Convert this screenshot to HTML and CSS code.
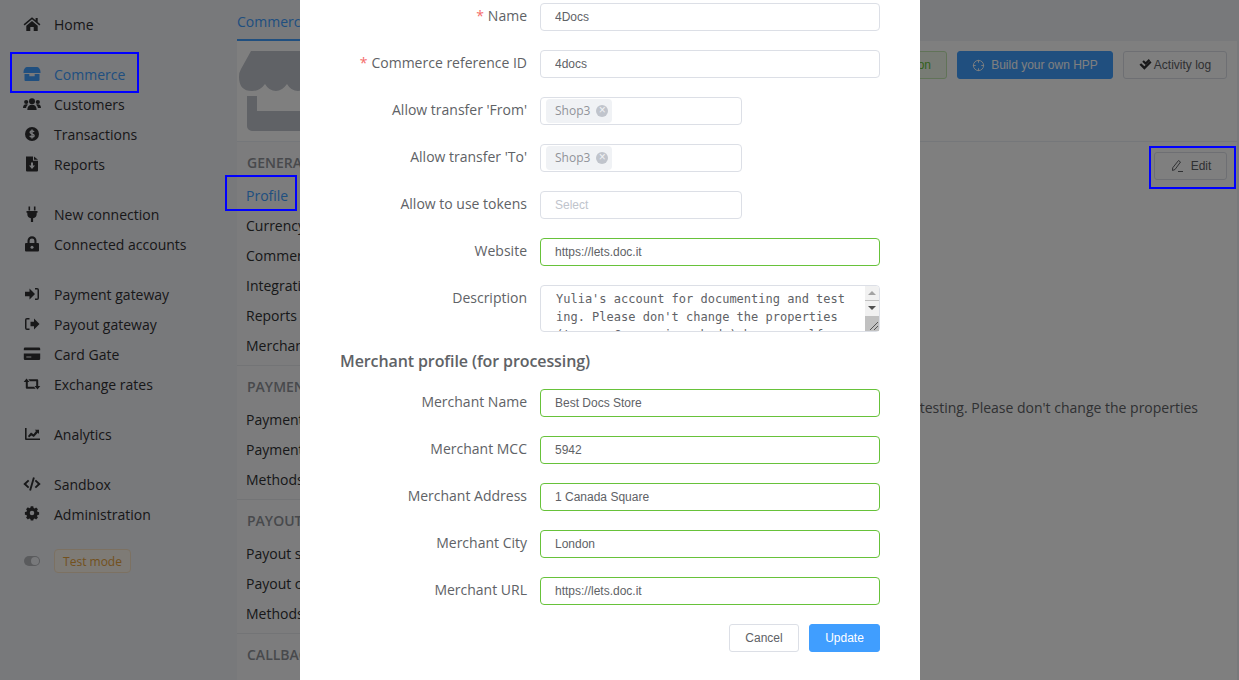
FILE: index.html

```html
<!DOCTYPE HTML>
<html>
<head>
<meta charset="utf-8">
<title>Commerce</title>
<link rel="stylesheet" href="styles.css">
</head>

<body>
<div class="page">
	<div class="sidebar">
		<ul class="menu">
			<li><svg class="ico" viewBox="0 0 18 18"><path d="M9 2.200.6 9.300l1 1.200L9 4.300l7.400 6.200 1-1.200-2.700-2.300V3h-2.100v2.200z"/><path d="M3.300 10.800 9 6l5.700 4.800V16h-4v-4H7.300v4h-4z"/></svg>Home</li>
		</ul>
		<ul class="menu">
			<li class="on"><svg class="ico" viewBox="0 0 18 18"><path d="M4 2h10c1.500 0 3.500 2 3.500 5v1H.5V7c0-3 2-5 3.500-5z"/><path d="M1.500 9h4.800v2.200h5.400V9h4.800v6a1 1 0 0 1-1 1h-13a1 1 0 0 1-1-1z"/></svg>Commerce</li>
			<li><svg class="ico" viewBox="0 0 18 18"><circle cx="9" cy="6.300" r="3"/><circle cx="3.200" cy="7" r="2.100"/><circle cx="14.800" cy="7" r="2.100"/><path d="M4.300 15c0-3.500 1.800-5.300 4.700-5.300s4.700 1.800 4.700 5.300zM0 13c0-2.300 1-3.700 3.200-3.700.7 0 1.200.1 1.700.4C3.800 10.500 3.200 11.600 3.100 13zM18 13c0-2.300-1-3.700-3.200-3.700-.7 0-1.200.1-1.700.4 1.100.8 1.700 1.900 1.800 3.300z"/></svg>Customers</li>
			<li><svg class="ico" viewBox="0 0 18 18"><circle cx="9" cy="9" r="7"/><path class="cut" d="M11 7c-.3-.8-1-1.100-2-1.100-1.100 0-1.900.5-1.900 1.400 0 2 4 1.100 4 3.200 0 1-.9 1.500-2.100 1.500-1.100 0-1.900-.4-2.200-1.300M9 4.500v9"/></svg>Transactions</li>
			<li><svg class="ico" viewBox="0 0 18 18"><path d="M3 1.500h7v4.200h5v9.800a1 1 0 0 1-1 1H4a1 1 0 0 1-1-1zM11 1.500l4 3.200h-4z"/><path class="hole" d="M8 7.500h2v3h2l-3 3.500-3-3.500h2z"/></svg>Reports</li>
		</ul>
		<ul class="menu">
			<li><svg class="ico" viewBox="0 0 18 18"><path d="M5.500 1.500h1.600v4H5.500zM10.900 1.500h1.600v4h-1.600zM3.500 6h11v1.800h-.8V9c0 2.400-1.500 4-3.600 4.300V17H7.900v-3.700C5.800 13 4.300 11.400 4.300 9V7.800h-.8z"/></svg>New connection</li>
			<li><svg class="ico" viewBox="0 0 18 18"><path d="M3 8h1.500V5.800a4.500 4.500 0 0 1 9 0V8H15a1 1 0 0 1 1 1v6.500a1 1 0 0 1-1 1H3a1 1 0 0 1-1-1V9a1 1 0 0 1 1-1zm3.600 0h4.800V5.800a2.400 2.400 0 0 0-4.800 0z"/><circle class="hole" cx="9" cy="12.200" r="1.500"/></svg>Connected accounts</li>
		</ul>
		<ul class="menu">
			<li><svg class="ico" viewBox="0 0 18 18"><path d="M2 6.700h4.500V3.500L12 9l-5.500 5.500v-3.200H2z"/><path d="M12 3h2a2 2 0 0 1 2 2v8a2 2 0 0 1-2 2h-2v-1.500h2.500V4.500H12z"/></svg>Payment gateway</li>
			<li><svg class="ico" viewBox="0 0 18 18"><path d="M7.500 6.700H11V3.500L16.500 9 11 14.500v-3.200H7.500z"/><path d="M6.500 3H4a2 2 0 0 0-2 2v8a2 2 0 0 0 2 2h2.500v-1.500H3.500V4.500h3z"/></svg>Payout gateway</li>
			<li><svg class="ico" viewBox="0 0 18 18"><path d="M2 2.500h14a1.200 1.200 0 0 1 1.200 1.200V5.300H.8V3.700A1.200 1.200 0 0 1 2 2.500zM.8 8.500h16.400v5.300A1.200 1.200 0 0 1 16 15H2A1.200 1.200 0 0 1 .8 13.800zm2.500 3v1h5v-1z"/></svg>Card Gate</li>
			<li><svg class="ico" viewBox="0 0 18 18"><path d="M3.500 3.500 6.500 7H4.800v4.700H11l1.700 2H3.800a1 1 0 0 1-1-1V7H.7z"/><path d="M14.500 14.500 11.500 11h1.700V6.300H7l-1.700-2h8.900a1 1 0 0 1 1 1V11h2.100z"/></svg>Exchange rates</li>
		</ul>
		<ul class="menu">
			<li><svg class="ico" viewBox="0 0 18 18"><path d="M2 3h1.600v10.500H17V15H3a1 1 0 0 1-1-1z"/><path d="m5 11 3-3.500 2.500 1.700L13 6l-1.200-1.200H16V9l-1.200-1.200-4 4.300L8.300 10.400 6 12.500z"/></svg>Analytics</li>
		</ul>
		<ul class="menu">
			<li><svg class="ico" viewBox="0 0 18 18"><path d="M5 4.700 6.300 6 3.200 9l3.100 3L5 13.300.3 9zM13 4.700 11.700 6l3.100 3-3.100 3 1.300 1.300L17.700 9zM10 2.300l1.800.5L8 15.700l-1.800-.5z"/></svg>Sandbox</li>
			<li><svg class="ico" viewBox="0 0 18 18"><path d="M7.600 2.500h2.800l.4 1.800 1.200.5 1.600-1 2 2-1 1.600.5 1.200 1.800.4v2.800l-1.800.4-.5 1.200 1 1.600-2 2-1.600-1-1.200.5-.4 1.800H7.600l-.4-1.800-1.200-.5-1.600 1-2-2 1-1.600-.5-1.200-1.800-.4V8.800l1.800-.4.5-1.200-1-1.600 2-2 1.600 1 1.200-.5zM9 7.500a2.500 2.500 0 1 0 0 5 2.500 2.500 0 0 0 0-5z" transform="translate(.9 -.9) scale(.9)"/></svg>Administration</li>
		</ul>
		<div class="mode">
			<span class="switch"><i></i></span>
			<span class="mode-tag">Test mode</span>
		</div>
	</div>

	<div class="main">
		<div class="tabs"><a class="tab">Commerce</a></div>
		<div class="head">
			<svg class="shop" viewBox="0 0 100 80"><path d="M12 0H100V33Q92 40 81 40Q74 40 70 33Q65 40 59 40Q52 40 48 33Q43 40 37 40Q30 40 26 33Q21 40 13 40Q0 40 0 26Q0 21 2 18Z"/><path d="M8 45H18V60H100V80H13a5 5 0 0 1-5-5Z"/></svg>
			<div class="head-btns">
				<a class="btn btn-green">Test transaction</a>
				<a class="btn btn-blue"><svg class="btn-ico" viewBox="0 0 14 14"><circle cx="7" cy="7" r="5.500"/><path d="M7 1v3M7 10v3M1 7h3M10 7h3"/></svg>Build your own HPP</a>
				<a class="btn btn-log"><svg class="btn-check" viewBox="0 0 14 14"><path d="m3.500 3 1.700-1.700 2 2L10.500 0 12 1.700 7.200 6.500z"/><path d="M.5 6.300 2.300 4.500l3.500 3.400L11.800 2 13.500 3.800 5.800 11.500z"/></svg>Activity log</a>
			</div>
		</div>
		<div class="body">
			<div class="subnav">
				<div class="group">
					<h4>GENERAL</h4>
					<a class="on">Profile</a>
					<a>Currency</a>
					<a>Commerce</a>
					<a>Integrations</a>
					<a>Reports</a>
					<a>Merchant</a>
				</div>
				<div class="group">
					<h4>PAYMENT</h4>
					<a>Payment</a>
					<a>Payment</a>
					<a>Methods</a>
				</div>
				<div class="group">
					<h4>PAYOUT</h4>
					<a>Payout s</a>
					<a>Payout c</a>
					<a>Methods</a>
				</div>
				<div class="group">
					<h4>CALLBACK</h4>
				</div>
			</div>
			<div class="detail">
				<a class="btn btn-edit"><svg class="btn-pen" viewBox="0 0 14 14"><path d="M8.500 1.500 10.500 3l-5.500 7.500-2.500 1 .2-2.700zM8 12.500h5"/></svg>Edit</a>
				<p class="about">Yulia's account for documenting and testing. Please don't change the properties</p>
			</div>
		</div>
	</div>
</div>

<div class="mask"></div>

<div class="mark mark-commerce"></div>
<div class="mark mark-profile"></div>
<div class="mark mark-edit"></div>

<div class="modal">
	<div class="row">
		<label class="req">Name</label>
		<input class="inp" value="4Docs">
	</div>
	<div class="row">
		<label class="req">Commerce reference ID</label>
		<input class="inp" value="4docs">
	</div>
	<div class="row">
		<label>Allow transfer 'From'</label>
		<div class="sel"><span class="tag">Shop3<i>&times;</i></span></div>
	</div>
	<div class="row">
		<label>Allow transfer 'To'</label>
		<div class="sel"><span class="tag">Shop3<i>&times;</i></span></div>
	</div>
	<div class="row">
		<label>Allow to use tokens</label>
		<div class="sel"><span class="ph">Select</span></div>
	</div>
	<div class="row">
		<label>Website</label>
		<input class="inp ok" value="https://lets.doc.it">
	</div>
	<div class="row row-area">
		<label>Description</label>
		<div class="area-wrap">
			<textarea class="area" rows="3">Yulia's account for documenting and testing. Please don't change the properties (terms, Currencies, body) by yourself or ask someone else to do it for you.</textarea>
			<div class="sbar">
				<span class="arrow up"></span>
				<span class="arrow down"></span>
				<span class="thumb"><svg viewBox="0 0 14 15"><path d="M5 14 13 6M9 14l4-4"/></svg></span>
			</div>
		</div>
	</div>
	<h3>Merchant profile (for processing)</h3>
	<div class="row">
		<label>Merchant Name</label>
		<input class="inp ok" value="Best Docs Store">
	</div>
	<div class="row">
		<label>Merchant MCC</label>
		<input class="inp ok" value="5942">
	</div>
	<div class="row">
		<label>Merchant Address</label>
		<input class="inp ok" value="1 Canada Square">
	</div>
	<div class="row">
		<label>Merchant City</label>
		<input class="inp ok" value="London">
	</div>
	<div class="row">
		<label>Merchant URL</label>
		<input class="inp ok" value="https://lets.doc.it">
	</div>
	<div class="foot">
		<button class="b-cancel">Cancel</button>
		<button class="b-update">Update</button>
	</div>
</div>
</body>
</html>
```

FILE: styles.css

```css
* {margin:0; padding:0; box-sizing:border-box;}
li {list-style:none;}
html, body {height:100%; overflow:hidden;}
body {font-family:"Open Sans", "Noto Sans", sans-serif; font-size:14px; color:#303133; background:#fff;}

.page {display:flex; height:680px; overflow:hidden;}

/* left menu */
.sidebar {width:237px; flex:none; padding-top:9px; background:#f0f2f7;}
.menu {margin-bottom:20px;}
.menu li {display:flex; align-items:center; height:30px; padding-left:23px; color:#303133;}
.menu li.on {color:#409eff;}
.menu li.on .ico {fill:#409eff;}
.ico {width:18px; height:18px; margin-right:13px; fill:#303133; flex:none;}
.ico .cut {fill:none; stroke:#f0f2f7; stroke-width:1.400;}
.ico .hole {fill:#f0f2f7;}
.mode {display:flex; align-items:center; margin-top:1px; padding-left:24px; gap:14px; height:24px;}
.switch {width:16px; height:10px; border-radius:5px; background:#b4b6ba; position:relative;}
.switch i {position:absolute; right:1px; top:1px; width:8px; height:8px; border-radius:50%; background:#f0f2f7;}
.mode-tag {height:24px; width:77px; line-height:24px; text-align:center; font-size:12px; color:#e6a23c; background:#fdf6ec; border:1px solid #f8e3c5; border-radius:4px;}

/* main part */
.main {flex:1; min-width:0; display:flex; flex-direction:column; background:#fff; border-right:2px solid #f0f2f7;}
.tabs {height:41px; background:#f0f2f7;}
.tab {display:inline-block; height:41px; line-height:44px; font-size:14px; color:#409eff; border-bottom:2px solid #409eff; width:90px; white-space:nowrap;}
.head {height:101px; display:flex; justify-content:space-between; padding:10px 10px 0 2px; border-bottom:1px solid #ebeef5; background:#fff;}
.shop {width:100px; height:80px; fill:#c0c4cc;}
.head-btns {display:flex; gap:10px; height:28px;}
.btn {display:inline-flex; align-items:center; height:28px; padding:0 12px; font-family:"Liberation Sans", sans-serif; font-size:12px; color:#606266; background:#fff; border:1px solid #dcdfe6; border-radius:3px; white-space:nowrap;}
.btn-green {justify-content:flex-end; padding-right:15px; color:#67c23a; background:#f0f9eb; border-color:#c2e7b0; width:130px;}
.btn-blue {width:156px; justify-content:center; color:#fff; background:#409eff; border-color:#409eff;}
.btn-log {width:104px; justify-content:center;}
.btn-ico {width:13px; height:13px; margin-right:6px; fill:none; stroke:#fff; stroke-width:1;}
.btn-check {width:13px; height:13px; margin-right:2px; fill:#303133;}
.body {flex:1; display:flex; min-height:0;}
.subnav {width:100px; flex:none; background:#f8f9fb;}
.group {padding:10px 0 0 9px; border-bottom:1px solid #e6e8ec; height:134px;}
.group:first-child {height:224px;}
.group h4 {height:24px; line-height:22px; margin-bottom:5px; padding-left:1px; font-size:14px; font-weight:600; color:#909399; white-space:nowrap; overflow:hidden;}
.group a {display:block; height:30px; line-height:30px; color:#303133; white-space:nowrap; overflow:hidden;}
.group a.on {color:#409eff;}
.detail {flex:1; position:relative; padding:10px 10px 0 0; display:flex; flex-direction:column; align-items:flex-end;}
.btn-edit {width:73px; justify-content:center;}
.btn-pen {width:14px; height:14px; margin-right:7px; fill:none; stroke:#606266; stroke-width:1;}
.about {margin-top:218px; margin-right:29px; color:#606266; white-space:nowrap;}

.mask {position:fixed; left:0; top:0; right:0; bottom:0; background:rgba(0,0,0,0.5);}

/* blue frames drawn on the screenshot */
.mark {position:fixed; border:2px solid #0000ff;}
.mark-commerce {left:10px; top:52px; width:129px; height:41px;}
.mark-profile {left:225px; top:175px; width:72px; height:36px;}
.mark-edit {left:1149px; top:146px; width:87px; height:43px;}

/* dialog */
.modal {position:fixed; left:300px; top:0; width:620px; height:680px; padding:3px 40px 0; background:#fff; color:#606266;}
.row {display:flex; height:28px; margin-bottom:19px;}
.row label {width:200px; flex:none; padding-right:13px; text-align:right; line-height:26px; color:#606266;}
.req:before {content:"*"; color:#f56c6c; margin-right:4px;}
.inp {flex:1; min-width:0; height:28px; padding:0 14px; font-family:"Liberation Sans", sans-serif; font-size:12px; color:#606266; border:1px solid #dcdfe6; border-radius:4px; outline:none;}
.inp.ok {border-color:#67c23a;}
.sel {width:202px; height:28px; padding:2px 5px; display:flex; align-items:center; border:1px solid #dcdfe6; border-radius:4px;}
.tag {display:flex; align-items:center; height:24px; padding:0 4px 1px 9px; font-size:12px; color:#909399; background:#f0f2f5; border-radius:4px;}
.tag i {display:block; width:12px; height:12px; margin:1px 0 0 6px; line-height:11px; text-align:center; font-style:normal; font-family:"Liberation Sans", sans-serif; font-size:12px; color:#f0f2f5; background:#c0c4cc; border-radius:50%;}
.ph {padding-left:9px; font-family:"Liberation Sans", sans-serif; font-size:12px; color:#c0c4cc;}
.row-area {height:47px; margin-bottom:0;}
.area-wrap {flex:1; min-width:0; height:47px; position:relative;}
.area {display:block; width:100%; height:47px; padding:4px 30px 0 15px; font-family:"DejaVu Sans Mono", monospace; font-size:12px; line-height:18px; color:#606266; border:1px solid #dcdfe6; border-radius:4px; outline:none; resize:none; overflow:hidden; word-break:break-all;}
.sbar {position:absolute; right:1px; top:1px; bottom:1px; width:14px; display:flex; flex-direction:column; background:#f1f1f1; border-radius:0 3px 3px 0;}
.arrow {height:15px; flex:none; position:relative;}
.arrow:before {content:""; position:absolute; left:3px; top:5px; border-left:4px solid transparent; border-right:4px solid transparent;}
.arrow.up {border-bottom:1px solid #c1c1c1;}
.arrow.up:before {border-bottom:4px solid #a3a3a3;}
.arrow.down:before {border-top:4px solid #505050;}
.thumb {flex:1; background:#c1c1c1;}
.thumb svg {display:block; width:14px; height:15px; fill:none; stroke:#555; stroke-width:1;}
h3 {height:57px; line-height:58px; font-size:16px; font-weight:600; letter-spacing:-0.1px; color:#606266;}
.foot {display:flex; justify-content:flex-end; gap:10px;}
.foot button {height:28px; font-family:"Liberation Sans", sans-serif; font-size:12px; border-radius:3px; border:1px solid #dcdfe6;}
.b-cancel {width:70px; color:#606266; background:#fff;}
.b-update {width:71px; color:#fff; background:#409eff; border-color:#409eff !important;}
```
